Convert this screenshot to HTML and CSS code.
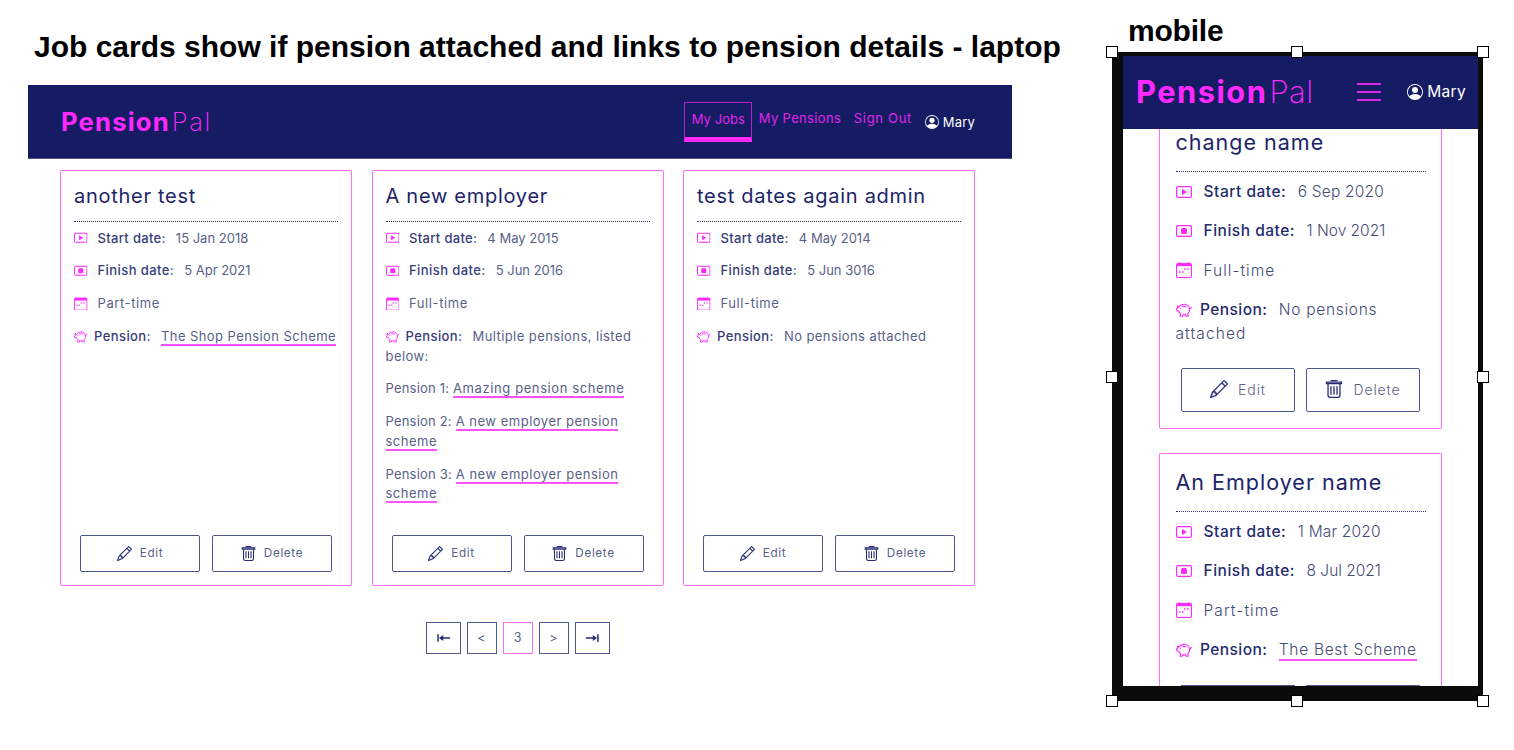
FILE: index.html
```html
<!DOCTYPE html>
<html lang="en">
<head>
<meta charset="utf-8">
<title>PensionPal job cards</title>
<link rel="stylesheet" href="styles.css">
</head>
<body>
<svg class="defs" aria-hidden="true">
  <symbol id="play" viewBox="0 0 16 16"><rect x=".6" y="2.600" width="14.800" height="10.800" rx="1.500" fill="none" stroke="currentColor" stroke-width="1.200"/><path fill="currentColor" d="M6 5v6l5-3z"/></symbol>
  <symbol id="stop" viewBox="0 0 16 16"><rect x=".6" y="2.600" width="14.800" height="10.800" rx="1.500" fill="none" stroke="currentColor" stroke-width="1.200"/><rect x="5" y="5" width="6" height="6" rx="1.500" fill="currentColor"/></symbol>
  <symbol id="cal" viewBox="0 0 16 16"><path fill="currentColor" stroke="currentColor" stroke-width=".2" d="M3.500 0a.5.5 0 0 1 .5.5V1h8V.5a.5.5 0 0 1 1 0V1h1a2 2 0 0 1 2 2v11a2 2 0 0 1-2 2H2a2 2 0 0 1-2-2V3a2 2 0 0 1 2-2h1V.5a.5.5 0 0 1 .5-.5zM1 4v10a1 1 0 0 0 1 1h12a1 1 0 0 0 1-1V4H1z"/><path fill="currentColor" d="M8 6.200h1.500v1.500H8zM11 6.200h1.500v1.500H11zM3 9.200h1.500v1.500H3zM6 9.200h1.500v1.500H6z"/></symbol>
  <symbol id="pig" viewBox="0 0 16 16"><g fill="none" stroke="currentColor" stroke-width="1.150" stroke-linejoin="round" stroke-linecap="round"><path d="M3 5.100C4.100 3.300 6 2.200 8.200 2.200c3 0 5.500 2.200 5.500 5.200 0 1.700-.9 3.100-1.900 4.100l.4 2.700H10l-.4-1.500c-1 .2-1.900.2-2.800 0l-.4 1.500H4.200l.4-2.700c-.9-.7-1.500-1.400-1.800-2.300L.8 8.700l-.1-2.100 1-.5-.3-2z"/><path d="M6.300 4.700c1.300-.4 2.500-.3 3.700.1M13.600 6.700c.7-.1 1.500-.5 1.700-1.400"/></g><circle cx="4.500" cy="6.600" r=".7" fill="currentColor"/></symbol>
  <symbol id="pencil" viewBox="0 0 16 16"><path fill="currentColor" stroke="currentColor" stroke-width=".25" d="M12.146.146a.5.5 0 0 1 .708 0l3 3a.5.5 0 0 1 0 .708l-10 10a.5.5 0 0 1-.168.11l-5 2a.5.5 0 0 1-.65-.65l2-5a.5.5 0 0 1 .11-.168l10-10zM11.207 2.500 13.500 4.793 14.793 3.500 12.500 1.207 11.207 2.500zm1.586 3L10.500 3.207 4 9.707V10h.5a.5.5 0 0 1 .5.5v.5h.5a.5.5 0 0 1 .5.5v.5h.293l6.500-6.500zm-9.761 5.175-.106.106-1.528 3.821 3.821-1.528.106-.106A.5.5 0 0 1 5 12.500V12h-.5a.5.5 0 0 1-.5-.5V11h-.5a.5.5 0 0 1-.468-.325z"/></symbol>
  <symbol id="bin" viewBox="0 0 16 16"><g fill="none" stroke="currentColor" stroke-width="1.150"><path d="M5.500 1.200V.6h5v.6"/><path d="M1.300 1.800h13.400v1.500H1.300z"/><path d="M2.700 3.500v10.100c0 1.100.8 1.800 1.800 1.800h7c1 0 1.800-.7 1.800-1.800V3.500"/><path d="M5.300 5.500V13M8 5.500V13M10.700 5.500V13"/></g></symbol>
  <symbol id="person" viewBox="0 0 16 16"><g fill="currentColor"><circle cx="8" cy="6" r="3"/><path fill-rule="evenodd" d="M0 8a8 8 0 1 1 16 0A8 8 0 0 1 0 8zm8-7a7 7 0 0 0-5.468 11.370C3.242 11.226 4.805 10 8 10s4.757 1.225 5.468 2.370A7 7 0 0 0 8 1z"/></g></symbol>
  <symbol id="first" viewBox="0 0 16 12"><path fill="none" stroke="currentColor" stroke-width="1.600" d="M2.200 2v8M5 6h10"/><path fill="currentColor" d="M3.200 6 7.700 2.700v6.600z"/></symbol>
</svg>

<section class="laptop">
  <h1 class="caption">Job cards show if pension attached and links to pension details - laptop</h1>
  <header class="topbar">
    <div class="logo"><b>Pension</b><span>Pal</span></div>
    <nav class="nav">
      <a class="active">My Jobs</a>
      <a class="pensions">My Pensions</a>
      <a class="signout s7">Sign Out</a>
      <span class="user"><svg><use href="#person"/></svg>Mary</span>
    </nav>
  </header>
  <main class="cards">
    <article class="card">
      <h2>another test</h2>
      <p><svg><use href="#play"/></svg><b class="s3">Start date:</b><span>15 Jan 2018</span></p>
      <p><svg><use href="#stop"/></svg><b class="s4">Finish date:</b><span>5 Apr 2021</span></p>
      <p><svg><use href="#cal"/></svg><span class="s6">Part-time</span></p>
      <p class="pension"><svg><use href="#pig"/></svg><b class="s4">Pension:</b><a class="s4">The Shop Pension Scheme</a></p>
      <div class="actions"><button><svg><use href="#pencil"/></svg>Edit</button><button><svg><use href="#bin"/></svg>Delete</button></div>
    </article>
    <article class="card">
      <h2>A new employer</h2>
      <p><svg><use href="#play"/></svg><b class="s3">Start date:</b><span>4 May 2015</span></p>
      <p><svg><use href="#stop"/></svg><b class="s4">Finish date:</b><span>5 Jun 2016</span></p>
      <p><svg><use href="#cal"/></svg><span class="s6">Full-time</span></p>
      <p class="pension"><svg><use href="#pig"/></svg><b class="s4">Pension:</b><span class="s4">Multiple pensions, listed below:</span></p>
      <p class="item">Pension 1: <a class="s6">Amazing pension scheme</a></p>
      <p class="item">Pension 2: <a class="s5">A new employer pension scheme</a></p>
      <p class="item">Pension 3: <a class="s5">A new employer pension scheme</a></p>
      <div class="actions"><button><svg><use href="#pencil"/></svg>Edit</button><button><svg><use href="#bin"/></svg>Delete</button></div>
    </article>
    <article class="card">
      <h2>test dates again admin</h2>
      <p><svg><use href="#play"/></svg><b class="s3">Start date:</b><span>4 May 2014</span></p>
      <p><svg><use href="#stop"/></svg><b class="s4">Finish date:</b><span>5 Jun 3016</span></p>
      <p><svg><use href="#cal"/></svg><span class="s6">Full-time</span></p>
      <p class="pension"><svg><use href="#pig"/></svg><b class="s4">Pension:</b><span class="s4">No pensions attached</span></p>
      <div class="actions"><button><svg><use href="#pencil"/></svg>Edit</button><button><svg><use href="#bin"/></svg>Delete</button></div>
    </article>
  </main>
  <div class="pager">
    <a class="wide"><svg><use href="#first"/></svg></a><a>&lt;</a><a class="current">3</a><a>&gt;</a><a class="wide"><svg class="flip"><use href="#first"/></svg></a>
  </div>
</section>

<section class="mobile">
  <h1 class="caption">mobile</h1>
  <div class="frame">
    <div class="screen">
      <header class="topbar">
        <div class="logo"><b>Pension</b><span>Pal</span></div>
        <div class="burger"><i></i><i></i><i></i></div>
        <span class="user"><svg><use href="#person"/></svg>Mary</span>
      </header>
      <div class="stack">
        <article class="card cut">
          <h2>change name</h2>
          <p><svg><use href="#play"/></svg><b class="s5">Start date:</b><span class="s2">6 Sep 2020</span></p>
          <p><svg><use href="#stop"/></svg><b class="s5">Finish date:</b><span>1 Nov 2021</span></p>
          <p><svg><use href="#cal"/></svg><span class="s10">Full-time</span></p>
          <p class="pension"><svg><use href="#pig"/></svg><b class="s4">Pension:</b><span class="s7">No pensions</span> <span class="s11 wrapped">attached</span></p>
          <div class="actions"><button><svg><use href="#pencil"/></svg>Edit</button><button><svg><use href="#bin"/></svg>Delete</button></div>
        </article>
        <article class="card clipped">
          <h2>An Employer name</h2>
          <p><svg><use href="#play"/></svg><b class="s5">Start date:</b><span class="s2">1 Mar 2020</span></p>
          <p><svg><use href="#stop"/></svg><b class="s5">Finish date:</b><span>8 Jul 2021</span></p>
          <p><svg><use href="#cal"/></svg><span class="s11">Part-time</span></p>
          <p class="pension"><svg><use href="#pig"/></svg><b class="s4">Pension:</b><a class="s7">The Best Scheme</a></p>
          <div class="actions"><button></button><button></button></div>
        </article>
      </div>
    </div>
    <i class="handle top left"></i><i class="handle top center"></i><i class="handle top right"></i>
    <i class="handle middle left"></i><i class="handle middle right"></i>
    <i class="handle bottom left"></i><i class="handle bottom center"></i><i class="handle bottom right"></i>
  </div>
</section>
</body>
</html>
```
FILE: styles.css
```css
* { box-sizing: border-box; }
body {
  margin: 0;
  width: 1514px;
  height: 750px;
  overflow: hidden;
  background: #fff;
  display: flex;
  gap: 100px;
  padding-left: 28px;
  font-family: Inter, "Open Sans", sans-serif;
  color: #151c63;
}
.defs { position: absolute; width: 0; height: 0; }
h1, h2, p { margin: 0; font-weight: 400; }
b { font-weight: 500; }
.caption {
  font: 700 30px/34px "Liberation Sans", Arial, sans-serif;
  color: #000;
  white-space: nowrap;
}

/* tracking steps, tenths of a pixel */
.s2 { letter-spacing: .2px; }
.s3 { letter-spacing: .33px; }
.s4 { letter-spacing: .42px; }
.s5 { letter-spacing: .51px; }
.s6 { letter-spacing: .6px; }
.s7 { letter-spacing: .7px; }
.s10 { letter-spacing: 1px; }
.s11 { letter-spacing: 1.1px; }

/* shared header */
.topbar { background: #151c63; display: flex; align-items: center; }
.logo { color: #ff29ff; display: flex; white-space: nowrap; }
.logo b { font-weight: 700; }
.logo span { font-weight: 200; }
.user { color: #fff; display: flex; align-items: center; }

/* laptop */
.laptop { width: 984px; }
.laptop .caption { padding: 30px 0 0 6px; height: 85px; }
.laptop .topbar { height: 74px; padding: 0 37px 0 33px; justify-content: space-between; border-bottom: 1px solid #4d538a; }
.laptop .logo { font-size: 25.600px; letter-spacing: 1.200px; gap: 2px; }
.laptop .logo span { letter-spacing: 1.600px; }
.nav { display: flex; align-items: center; font-size: 13px; font-weight: 400; color: #e025ec; white-space: nowrap; }
.nav .active { width: 68px; height: 40px; padding: 8px 0 0 7px; border: 1px solid #b522cb; border-bottom: 5px solid #ff29ff; letter-spacing: .05px; }
.nav .pensions { margin: 0 0 7px 7px; width: 83px; letter-spacing: .35px; }
.nav .signout { margin: 0 0 7px 12px; width: 59px; }
.nav .user { margin-left: 12px; gap: 4px; letter-spacing: .2px; }
.nav .user svg { width: 14px; height: 14px; }

.cards { display: grid; grid-template-columns: repeat(3, 292px); gap: 19.500px; padding: 11px 0 0 32px; }
.card { display: flex; flex-direction: column; border: 1px solid #ff6cfa; border-radius: 2px; }
.card p { color: #595f88; }
.card p > b { color: #363d78; }
.card svg { color: #ff29ff; }
.laptop .card { height: 416px; padding: 0 13px 13px; font-size: 13px; line-height: 19.700px; }
.card h2 { letter-spacing: .72px; color: #1d2468; }
.laptop .card h2 { font-size: 20px; line-height: 50px; height: 51px; border-bottom: 1px dotted #2b3270; margin-bottom: 6.500px; white-space: nowrap; }
.laptop .card p { margin-bottom: 13.100px; }
.laptop .card p svg { width: 13.500px; height: 13.500px; margin-right: 10px; vertical-align: -2.200px; }
.laptop .card p.pension svg { margin-right: 6.500px; }
.card p > b + span, .card p > b + a { margin-left: 10px; }
.card .item { letter-spacing: .2px; }
.card a { border-bottom: 2px solid #ff52fb; }
.actions { display: flex; justify-content: center; margin-top: auto; gap: 12px; }
.actions button {
  display: flex; align-items: center; justify-content: center;
  background: none; border: 1px solid #50578c; border-radius: 2px;
  font-family: inherit; color: #595f88; padding: 0;
}
.actions button svg { color: #252c72; }
.laptop .actions button { width: 120px; height: 37px; font-size: 11.700px; letter-spacing: .65px; gap: 8px; padding-bottom: 1px; }
.laptop .actions svg { width: 15px; height: 15px; }

.pager { display: flex; justify-content: center; gap: 6px; padding: 36px 5px 0 0; }
.pager a { width: 30px; height: 32px; border: 1px solid #50578c; display: flex; align-items: center; justify-content: center; font-size: 12.500px; color: #595f88; padding-bottom: 1px; }
.pager .wide { width: 35px; color: #252c72; }
.pager .current { border-color: #ff6cfa; }
.pager svg { width: 15px; height: 12px; }
.pager .flip { transform: scaleX(-1); }

/* phone */
.mobile { width: 371px; }
.mobile .caption { padding: 14px 0 0 16px; height: 52px; letter-spacing: -.2px; }
.frame { position: relative; width: 371px; height: 649px; background: #0b0b0b; padding: 4px 5px 15px 11px; }
.screen { background: #fff; height: 630px; overflow: hidden; }
.mobile .topbar { height: 73px; padding: 0 12px 2px 13px; }
.mobile .logo { font-size: 30.800px; letter-spacing: 1.500px; width: 221px; gap: 2px; }
.mobile .logo span { letter-spacing: .6px; }
.burger { display: grid; gap: 6px; width: 24px; padding-top: 1px; }
.burger i { height: 2px; background: #d925e6; }
.mobile .user { margin-left: auto; gap: 4px; font-size: 15.500px; letter-spacing: .3px; }
.mobile .user svg { width: 16px; height: 16px; }
.stack { height: 557px; overflow: hidden; padding: 0 36px; display: flex; flex-direction: column; gap: 24px; }
.mobile .card { flex: none; padding: 0 15.500px; font-size: 15.500px; line-height: 23.500px; }
.mobile .cut { height: 317px; border-top: 0; border-radius: 0 0 2px 2px; margin-top: -17px; }
.mobile .clipped { height: 233px; border-bottom: 0; border-radius: 2px 2px 0 0; overflow: hidden; }
.mobile .card h2 { font-size: 21.500px; line-height: 61px; height: 60px; border-bottom: 1px dotted #2b3270; margin-bottom: 8px; letter-spacing: 1px; }
.mobile .clipped h2 { height: 58px; line-height: 56px; }
.mobile .card p { margin-bottom: 15.900px; font-weight: 300; color: #454c75; }
.mobile .card p > b { color: #252c6e; }
.mobile .card p svg { width: 16px; height: 16px; margin-right: 12px; vertical-align: -2.500px; }
.mobile .card p.pension svg { margin-right: 8.500px; }
.mobile .card p > b + span, .mobile .card p > b + a { margin-left: 11.500px; }
.mobile .actions { gap: 11px; margin: auto -8px 16px 5.500px; justify-content: flex-start; }
.mobile .actions button { width: 114px; height: 44px; flex: none; font-size: 14px; font-weight: 300; letter-spacing: .9px; gap: 10px; padding-bottom: 2px; }
.mobile .actions svg { width: 18px; height: 18px; }
.mobile .clipped .actions { margin-bottom: 0; }
.mobile .clipped .actions button { height: 1px; border-width: 1px 0 0; border-radius: 0; padding: 0; }

.handle { position: absolute; width: 12px; height: 12px; background: #fff; border: 1px solid #000; }
.handle.top { top: -6px; }
.handle.middle { top: 319px; }
.handle.bottom { bottom: -6px; }
.handle.left { left: -6px; }
.handle.center { left: 179px; }
.handle.right { right: -6px; }
```
